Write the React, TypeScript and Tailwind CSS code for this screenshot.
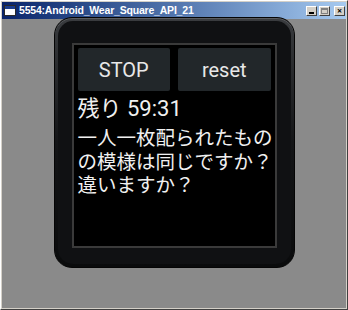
import React from "react";

function TitleButton({ children }: { children: React.ReactNode }) {
  return (
    <div className="w-[11px] h-[10px] bg-[#d4d0c8] border border-t-white border-l-white border-r-[#404040] border-b-[#404040] flex items-center justify-center text-[9px] leading-none text-black font-bold">
      {children}
    </div>
  );
}

function WatchButton({ label }: { label: string }) {
  return (
    <div className="flex-1 h-[43px] bg-[#22272a] rounded-[2px] flex items-center justify-center text-[#e8e8e8] text-[20px] font-['Roboto',sans-serif]">
      {label}
    </div>
  );
}

export default function App() {
  return (
    <div className="w-[348px] h-[310px] bg-[#d4d0c8] border border-t-white border-l-white border-r-[#404040] border-b-[#404040] p-[1px] flex flex-col overflow-hidden">
      <div className="h-[17px] shrink-0 bg-gradient-to-r from-[#0a246a] to-[#a6caf0] flex items-center pl-[2px] pr-[1px] gap-[3px]">
        <div className="w-[12px] h-[11px] bg-white border border-[#2a2a2a] flex items-start">
          <div className="w-full h-[3px] bg-[#1c3d8c]" />
        </div>
        <span className="text-white text-[10.5px] font-bold font-['Liberation_Sans',sans-serif] tracking-[-0.2px]">
          5554:Android_Wear_Square_API_21
        </span>
        <div className="ml-auto flex gap-[2px]">
          <TitleButton>
            <div className="w-[5px] h-[2px] bg-black mt-[5px]" />
          </TitleButton>
          <TitleButton>
            <div className="w-[7px] h-[6px] border border-[#808080] border-t-2" />
          </TitleButton>
          <div className="ml-[2px]">
            <TitleButton>×</TitleButton>
          </div>
        </div>
      </div>
      <div className="flex-1 bg-[#8a8a8a] flex justify-center">
        <div className="mt-[-2px] w-[241px] h-[251px] rounded-[18px] bg-gradient-to-b from-[#3a3c3f] via-[#141517] to-[#0a0b0c] border border-[#050505] p-[3px] shadow-[inset_0_1px_0_#5a5c60]">
          <div className="w-full h-full rounded-[15px] bg-[#101113] pt-[22px] px-[14px] pb-[16px]">
            <div className="w-full h-full bg-black border-2 border-[#3a3a3a] flex flex-col px-[4px] pt-[3px]">
              <div className="flex gap-[8px]">
                <WatchButton label="STOP" />
                <WatchButton label="reset" />
              </div>
              <div className="mt-[5px] text-[#f0f0f0] text-[22px] leading-[26px] font-['Roboto','Noto_Sans_CJK_JP',sans-serif]">
                残り 59:31
              </div>
              <div className="mt-[5px] whitespace-nowrap text-[#f0f0f0] text-[19.5px] leading-[23.5px] font-['Roboto','Noto_Sans_CJK_JP',sans-serif]">
                一人一枚配られたもの
                <br />
                の模様は同じですか？
                <br />
                違いますか？
              </div>
            </div>
          </div>
        </div>
      </div>
    </div>
  );
}
